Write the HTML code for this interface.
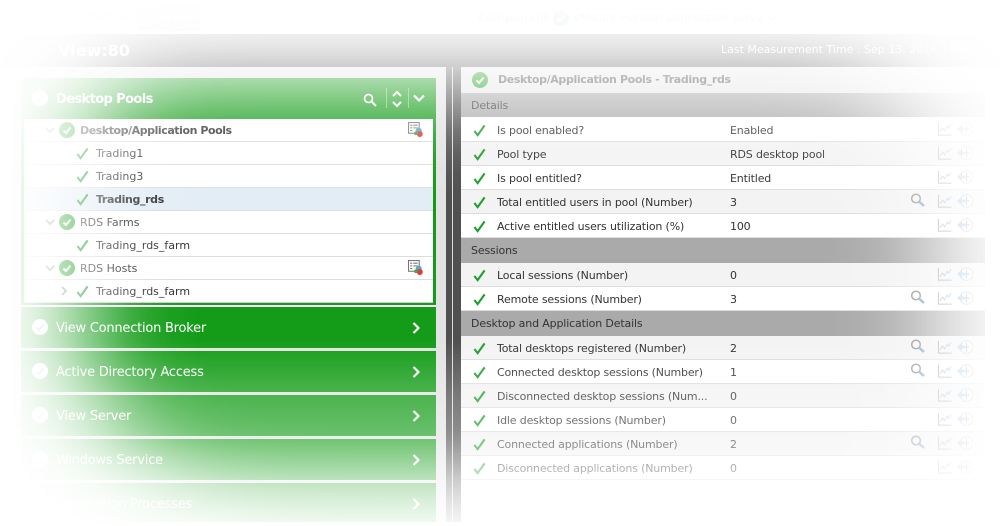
<!DOCTYPE html>
<html><head><meta charset="utf-8">
<style>
html,body{margin:0;padding:0;background:#fff;width:1000px;height:526px;overflow:hidden}
#p{position:relative;width:1000px;height:526px;overflow:hidden;background:#fff;font-family:"DejaVu Sans",sans-serif;font-size:11px;color:#333}
#p div,#p svg{position:absolute}
.t{white-space:nowrap;line-height:14px}
.acc{left:21px;width:415px;height:41px;background:#149c18}
.acc .n{left:35px;top:13px;font-size:13px;line-height:17px;color:#fff;white-space:nowrap;letter-spacing:-.23px}
.tr{left:24px;width:409px;height:22px;background:#fff;border-bottom:1px solid #ddd}
.tr .t{top:5px}
.r{left:461px;width:524px;height:23px;background:#fff;border-bottom:1px solid #ddd}
.r.a{background:#f3f3f3}
.r .k{left:36px;top:6px;white-space:nowrap;line-height:14px;letter-spacing:-.16px}
.r .v{left:269px;top:6px;white-space:nowrap;line-height:14px;letter-spacing:-.16px}
.s{left:461px;width:524px;background:#aaa;color:#333;white-space:nowrap}
.s span{position:absolute;left:10px;top:6px;line-height:14px;letter-spacing:-.15px}
</style></head><body><div id="p">
<svg width="0" height="0" style="left:0;top:0"><defs>
<symbol id="ck" viewBox="0 0 14 14"><path d="M1.500 7.500L5 12L12.500 1.500" fill="none" stroke="#1d9e2c" stroke-width="2.200"/></symbol>
<symbol id="cc" viewBox="0 0 16 16"><circle cx="8" cy="8" r="8" fill="#149c18"/><path d="M4.500 8.500L7 11L11.500 5.500" fill="none" stroke="#fff" stroke-width="2"/></symbol>
<symbol id="wc" viewBox="0 0 16 16"><circle cx="8" cy="8" r="8" fill="#fff"/><path d="M4.500 8.500L7 11L11.500 5.500" fill="none" stroke="#149c18" stroke-opacity=".45" stroke-width="2"/></symbol>
<symbol id="ch" viewBox="0 0 16 14"><path d="M1.500 0.500V13.500H15.500" fill="none" stroke="#999" stroke-width="1"/><path d="M3 10L6 6L8 9L11 4L12.500 6L15 2" fill="none" stroke="#8fb4dc" stroke-width="1"/></symbol>
<symbol id="cl" viewBox="0 0 16 14"><circle cx="9.500" cy="7" r="6.300" fill="#fff" stroke="#bbb"/><path d="M9.500 2.500V11M5 7H13" stroke="#999" fill="none"/><path d="M0 7L5 2.500V5.500H8V8.500H5V11.500Z" fill="#9dbfe2"/></symbol>
<symbol id="mg" viewBox="0 0 16 14"><circle cx="6" cy="5.500" r="4.300" fill="none" stroke="#888" stroke-width="1.500"/><path d="M9.500 9L14 13" stroke="#6d9fd6" stroke-width="2.400"/></symbol>
<symbol id="re" viewBox="0 0 14 14"><rect x=".5" y=".5" width="10" height="10" fill="#fff" stroke="#777"/><path d="M2 3H4M5 3H9M2 5.500H4M5 5.500H9M2 8H4" stroke="#777"/><circle cx="10" cy="8" r="2.800" fill="#5ba7c9"/><circle cx="11" cy="11.200" r="2.800" fill="#e03a3a"/><circle cx="7.500" cy="10.500" r="1.800" fill="#49a83c"/></symbol>
<symbol id="dn" viewBox="0 0 10 7"><path d="M1 1L5 5L9 1" fill="none" stroke="#888" stroke-width="1.800"/></symbol>
<symbol id="rt" viewBox="0 0 8 12"><path d="M1.500 1L6.500 6L1.500 11" fill="none" stroke="#fff" stroke-width="2.200"/></symbol>
</defs></svg>

<!-- top bar -->
<div class="t" style="left:88px;top:10px;font-size:13px;color:#999;font-weight:bold">Network</div>
<div style="left:138px;top:5px;width:62px;height:26px;background:#ccc"></div>
<div class="t" style="left:149px;top:11px;font-size:12px;color:#fff;font-weight:bold">Layers</div>
<div class="t" style="left:478px;top:11px;color:#a88;font-weight:bold">Component</div>
<div style="left:548px;top:8px;width:233px;height:20px;border:1px solid #ddd;background:#fff"></div>
<svg style="left:553px;top:10px" width="16" height="16"><use href="#cc"/></svg>
<div class="t" style="left:573px;top:11px;color:#666">VMware Horizon Connection Serve</div>
<svg style="left:767px;top:15px" width="10" height="7"><use href="#dn"/></svg>
<div style="left:0;top:0;width:1000px;height:34px;background:linear-gradient(rgba(255,255,255,.4),rgba(255,255,255,.15))"></div>

<!-- title bar -->
<div style="left:0;top:34px;width:1000px;height:33px;background:#484848"></div>
<div class="t" style="left:58px;top:41px;font-size:16px;line-height:19px;font-weight:bold;color:#fff">View:80</div>
<div class="t" style="left:721px;top:43px;color:#fff">Last Measurement Time : Sep 13, 2016 14:32:05</div>

<!-- panels -->
<div style="left:12px;top:67px;width:434px;height:455px;background:#e3e3e3"></div>
<div style="left:446px;top:67px;width:15px;height:455px;background:#505050"></div>
<div style="left:452px;top:67px;width:1px;height:455px;background:#ddd"></div>
<div style="left:461px;top:67px;width:539px;height:459px;background:#fff"></div>

<!-- accordion -->
<div class="acc" style="top:78px;height:229px">
<div style="left:3px;top:41px;width:409px;height:184px;background:#fff"></div>
<div style="left:0;top:227px;width:415px;height:2px;background:#fff"></div>
<div class="n" style="left:35px;top:13px;font-weight:bold;letter-spacing:-.6px">Desktop Pools</div>
</div>
<svg style="left:32px;top:90px" width="16" height="16"><use href="#wc"/></svg>
<svg style="left:363px;top:93px" width="14" height="14"><circle cx="5.500" cy="5.500" r="4" fill="none" stroke="#fff" stroke-width="1.700"/><path d="M8.500 8.500L13 13" stroke="#fff" stroke-width="2"/></svg>
<div style="left:386px;top:88px;width:1px;height:20px;background:#fff;opacity:.4"></div>
<svg style="left:391px;top:89px" width="12" height="20"><path d="M2 7L6 3L10 7M2 13L6 17L10 13" fill="none" stroke="#fff" stroke-width="2"/></svg>
<div style="left:408px;top:88px;width:1px;height:20px;background:#fff;opacity:.4"></div>
<svg style="left:413px;top:94px" width="12" height="9" viewBox="0 0 12 9"><path d="M1 1.500L6 6.500L11 1.500" fill="none" stroke="#fff" stroke-width="2.200"/></svg>

<div class="tr" style="top:119px"><div class="t" style="left:56px;font-weight:bold;letter-spacing:-.44px">Desktop/Application Pools</div></div>
<div class="tr" style="top:142px"><div class="t" style="left:72px">Trading1</div></div>
<div class="tr" style="top:165px"><div class="t" style="left:72px">Trading3</div></div>
<div class="tr" style="top:188px;background:#e3edf6"><div class="t" style="left:72px;font-weight:bold;letter-spacing:-.36px">Trading_rds</div></div>
<div class="tr" style="top:211px"><div class="t" style="left:56px">RDS Farms</div></div>
<div class="tr" style="top:234px"><div class="t" style="left:72px">Trading_rds_farm</div></div>
<div class="tr" style="top:257px"><div class="t" style="left:56px">RDS Hosts</div></div>
<div class="tr" style="top:280px;height:22px;border-bottom:1px solid #ccc"><div class="t" style="left:72px">Trading_rds_farm</div></div>

<svg style="left:45px;top:127px" width="10" height="7"><use href="#dn"/></svg>
<svg style="left:45px;top:219px" width="10" height="7"><use href="#dn"/></svg>
<svg style="left:45px;top:265px" width="10" height="7"><use href="#dn"/></svg>
<svg style="left:59px;top:122px" width="16" height="16"><use href="#cc"/></svg>
<svg style="left:59px;top:214px" width="16" height="16"><use href="#cc"/></svg>
<svg style="left:59px;top:260px" width="16" height="16"><use href="#cc"/></svg>
<svg style="left:76px;top:147px" width="13" height="13"><use href="#ck"/></svg>
<svg style="left:76px;top:170px" width="13" height="13"><use href="#ck"/></svg>
<svg style="left:76px;top:193px" width="13" height="13"><use href="#ck"/></svg>
<svg style="left:76px;top:239px" width="13" height="13"><use href="#ck"/></svg>
<svg style="left:76px;top:285px" width="13" height="13"><use href="#ck"/></svg>
<svg style="left:61px;top:286px" width="6" height="10" viewBox="0 0 6 10"><path d="M1 1L5 5L1 9" fill="none" stroke="#888" stroke-width="1.800"/></svg>
<svg style="left:408px;top:122px" width="15" height="15"><use href="#re" width="15" height="15"/></svg>
<svg style="left:408px;top:260px" width="15" height="15"><use href="#re" width="15" height="15"/></svg>

<div class="acc" style="top:307px"><div class="n">View Connection Broker</div></div>
<div class="acc" style="top:351px"><div class="n">Active Directory Access</div></div>
<div class="acc" style="top:395px"><div class="n">View Server</div></div>
<div class="acc" style="top:439px"><div class="n">Windows Service</div></div>
<div class="acc" style="top:483px;height:39px"><div class="n">Application Processes</div></div>
<svg style="left:32px;top:319px" width="16" height="16"><use href="#wc"/></svg>
<svg style="left:32px;top:363px" width="16" height="16"><use href="#wc"/></svg>
<svg style="left:32px;top:407px" width="16" height="16"><use href="#wc"/></svg>
<svg style="left:32px;top:451px" width="16" height="16"><use href="#wc"/></svg>
<svg style="left:412px;top:322px" width="8" height="12"><use href="#rt"/></svg>
<svg style="left:412px;top:366px" width="8" height="12"><use href="#rt"/></svg>
<svg style="left:412px;top:410px" width="8" height="12"><use href="#rt"/></svg>
<svg style="left:412px;top:454px" width="8" height="12"><use href="#rt"/></svg>
<svg style="left:412px;top:498px" width="8" height="12"><use href="#rt"/></svg>

<!-- right -->
<div style="left:461px;top:67px;width:524px;height:26px;background:#e6e6e6"></div>
<svg style="left:472px;top:72px" width="16" height="16"><use href="#cc"/></svg>
<div class="t" style="left:498px;top:73px;font-weight:bold;color:#444;letter-spacing:-.36px">Desktop/Application Pools - Trading_rds</div>
<div class="s" style="top:93px;height:24px"><span>Details</span></div>
<div class="r" style="top:118px"><div class="k">Is pool enabled?</div><div class="v">Enabled</div></div>
<div class="r a" style="top:142px"><div class="k">Pool type</div><div class="v">RDS desktop pool</div></div>
<div class="r" style="top:166px"><div class="k">Is pool entitled?</div><div class="v">Entitled</div></div>
<div class="r a" style="top:190px"><div class="k">Total entitled users in pool (Number)</div><div class="v">3</div></div>
<div class="r" style="top:214px"><div class="k">Active entitled users utilization (%)</div><div class="v">100</div></div>
<div class="s" style="top:238px;height:25px"><span style="top:6px">Sessions</span></div>
<div class="r a" style="top:263px"><div class="k">Local sessions (Number)</div><div class="v">0</div></div>
<div class="r" style="top:287px"><div class="k">Remote sessions (Number)</div><div class="v">3</div></div>
<div class="s" style="top:311px;height:25px"><span style="top:6px">Desktop and Application Details</span></div>
<div class="r a" style="top:336px"><div class="k">Total desktops registered (Number)</div><div class="v">2</div></div>
<div class="r" style="top:360px"><div class="k" style="letter-spacing:-.2px">Connected desktop sessions (Number)</div><div class="v">1</div></div>
<div class="r a" style="top:384px"><div class="k">Disconnected desktop sessions (Num...</div><div class="v">0</div></div>
<div class="r" style="top:408px"><div class="k">Idle desktop sessions (Number)</div><div class="v">0</div></div>
<div class="r a" style="top:432px"><div class="k">Connected applications (Number)</div><div class="v">2</div></div>
<div class="r" style="top:456px"><div class="k">Disconnected applications (Number)</div><div class="v">0</div></div>

<svg style="left:473px;top:124px" width="13" height="13"><use href="#ck"/></svg>
<svg style="left:473px;top:148px" width="13" height="13"><use href="#ck"/></svg>
<svg style="left:473px;top:172px" width="13" height="13"><use href="#ck"/></svg>
<svg style="left:473px;top:196px" width="13" height="13"><use href="#ck"/></svg>
<svg style="left:473px;top:220px" width="13" height="13"><use href="#ck"/></svg>
<svg style="left:473px;top:269px" width="13" height="13"><use href="#ck"/></svg>
<svg style="left:473px;top:293px" width="13" height="13"><use href="#ck"/></svg>
<svg style="left:473px;top:342px" width="13" height="13"><use href="#ck"/></svg>
<svg style="left:473px;top:366px" width="13" height="13"><use href="#ck"/></svg>
<svg style="left:473px;top:390px" width="13" height="13"><use href="#ck"/></svg>
<svg style="left:473px;top:414px" width="13" height="13"><use href="#ck"/></svg>
<svg style="left:473px;top:438px" width="13" height="13"><use href="#ck"/></svg>
<svg style="left:473px;top:462px" width="13" height="13"><use href="#ck"/></svg>

<svg style="left:937px;top:122px" width="36" height="14"><use href="#ch" width="15" height="14"/><use href="#cl" x="20" width="16" height="14"/></svg>
<svg style="left:937px;top:146px" width="36" height="14"><use href="#ch" width="15" height="14"/><use href="#cl" x="20" width="16" height="14"/></svg>
<svg style="left:937px;top:170px" width="36" height="14"><use href="#ch" width="15" height="14"/><use href="#cl" x="20" width="16" height="14"/></svg>
<svg style="left:937px;top:194px" width="36" height="14"><use href="#ch" width="15" height="14"/><use href="#cl" x="20" width="16" height="14"/></svg>
<svg style="left:937px;top:218px" width="36" height="14"><use href="#ch" width="15" height="14"/><use href="#cl" x="20" width="16" height="14"/></svg>
<svg style="left:937px;top:267px" width="36" height="14"><use href="#ch" width="15" height="14"/><use href="#cl" x="20" width="16" height="14"/></svg>
<svg style="left:937px;top:291px" width="36" height="14"><use href="#ch" width="15" height="14"/><use href="#cl" x="20" width="16" height="14"/></svg>
<svg style="left:937px;top:340px" width="36" height="14"><use href="#ch" width="15" height="14"/><use href="#cl" x="20" width="16" height="14"/></svg>
<svg style="left:937px;top:364px" width="36" height="14"><use href="#ch" width="15" height="14"/><use href="#cl" x="20" width="16" height="14"/></svg>
<svg style="left:937px;top:388px" width="36" height="14"><use href="#ch" width="15" height="14"/><use href="#cl" x="20" width="16" height="14"/></svg>
<svg style="left:937px;top:412px" width="36" height="14"><use href="#ch" width="15" height="14"/><use href="#cl" x="20" width="16" height="14"/></svg>
<svg style="left:937px;top:436px" width="36" height="14"><use href="#ch" width="15" height="14"/><use href="#cl" x="20" width="16" height="14"/></svg>
<svg style="left:937px;top:460px" width="36" height="14"><use href="#ch" width="15" height="14"/><use href="#cl" x="20" width="16" height="14"/></svg>
<svg style="left:910px;top:193px" width="16" height="14"><use href="#mg"/></svg>
<svg style="left:910px;top:290px" width="16" height="14"><use href="#mg"/></svg>
<svg style="left:910px;top:339px" width="16" height="14"><use href="#mg"/></svg>
<svg style="left:910px;top:363px" width="16" height="14"><use href="#mg"/></svg>
<svg style="left:910px;top:435px" width="16" height="14"><use href="#mg"/></svg>

<!-- bottom fade -->
<div style="left:0;top:340px;width:1000px;height:186px;background:linear-gradient(rgba(255,255,255,0) 0%,rgba(255,255,255,.24) 29.6%,rgba(255,255,255,.36) 51.6%,rgba(255,255,255,.66) 75.3%,rgba(255,255,255,.9) 100%)"></div>
<!-- vignette -->
<svg style="left:0;top:0" width="1000" height="526" viewBox="0 0 1000 526">
<defs><filter id="b" filterUnits="userSpaceOnUse" x="0" y="0" width="1000" height="526">
<feGaussianBlur in="SourceAlpha" stdDeviation="50 47" result="bl"/>
<feComponentTransfer in="bl" result="inv"><feFuncA type="table" tableValues="1 0"/></feComponentTransfer>
<feFlood flood-color="#fff" result="w"/>
<feComposite in="w" in2="inv" operator="in"/>
</filter></defs>
<path filter="url(#b)" fill="#000" d="M175 95H815A120 120 0 0 1 935 215V466A60 60 0 0 1 875 526H285A200 200 0 0 1 85 326V185A90 90 0 0 1 175 95Z"/>
</svg>
</div></body></html>
